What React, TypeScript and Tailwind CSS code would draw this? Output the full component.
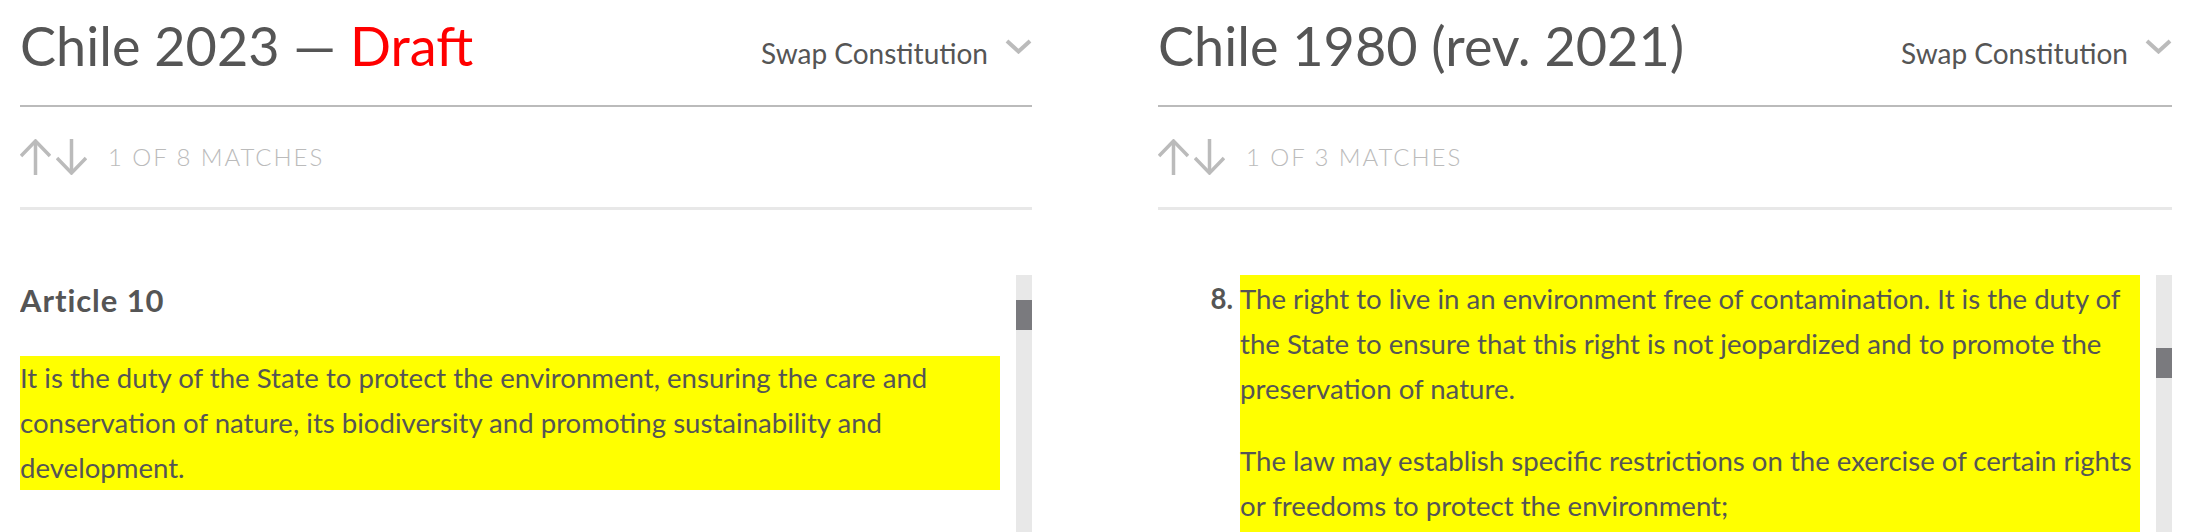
import React from 'react';

interface PanelProps {
    title: React.ReactNode;
    matches: string;
    thumbTop: number;
    children: React.ReactNode;
}

const Chevron: React.FC = () => (
    <svg width="27" height="15" viewBox="0 0 27 15" className="block">
        <polyline points="2,2 13.5,12.5 25,2" fill="none" stroke="#bbbbbb" strokeWidth="4" />
    </svg>
);

const UpArrow: React.FC = () => (
    <svg width="31" height="36" viewBox="0 0 31 36" className="block">
        <line x1="15.5" y1="2" x2="15.5" y2="36" stroke="#bbbbbb" strokeWidth="3.5" />
        <polyline points="1,17 15.5,2 30,17" fill="none" stroke="#bbbbbb" strokeWidth="3.5" />
    </svg>
);

const DownArrow: React.FC = () => (
    <svg width="31" height="36" viewBox="0 0 31 36" className="block">
        <line x1="15.5" y1="0" x2="15.5" y2="34" stroke="#bbbbbb" strokeWidth="3.5" />
        <polyline points="1,19 15.5,34 30,19" fill="none" stroke="#bbbbbb" strokeWidth="3.5" />
    </svg>
);

const Panel: React.FC<PanelProps> = ({ title, matches, thumbTop, children }) => (
    <div className="flex flex-col">
        {/* header */}
        <div className="h-[107px] flex justify-between border-b-2 border-[#bbbbbb]">
            <h1 className="pt-[14px] text-[54px] leading-[64px] text-[#555555] font-normal whitespace-nowrap">{title}</h1>
            <div className="pt-[36px] flex items-start gap-[17px]">
                <span className="text-[28px] leading-[34px] text-[#555555] whitespace-nowrap">Swap Constitution</span>
                <div className="pt-[3px]">
                    <Chevron />
                </div>
            </div>
        </div>

        {/* match navigation */}
        <div className="h-[103px] border-b-[3px] border-[#e8e8e8] flex items-start pt-[32px]">
            <div className="flex gap-[5px]">
                <UpArrow />
                <DownArrow />
            </div>
            <span className="ml-[21px] mt-[3px] text-[24px] leading-[29px] font-light tracking-[0.08em] text-[#bbbbbb] whitespace-nowrap">{matches}</span>
        </div>

        {/* scroll body */}
        <div className="mt-[65px] h-[257px] flex overflow-hidden">
            <div className="flex-1 overflow-hidden pr-[16px]">{children}</div>
            <div className="w-[16px] bg-[#e8e8e8] relative">
                <div className="absolute left-0 w-[16px] h-[30px] bg-[#7a7a7e]" style={{ top: thumbTop }} />
            </div>
        </div>
    </div>
);

const App: React.FC = () => {
    return (
        <div className="w-[2190px] h-[532px] overflow-hidden bg-white flex font-[Lato,sans-serif]">
            <div className="ml-[20px] w-[1012px]">
                <Panel
                    title={<>Chile 2023 — <span className="text-[#ff0000]">Draft</span></>}
                    matches="1 OF 8 MATCHES"
                    thumbTop={25}
                >
                    <h2 className="pt-[7px] text-[31px] leading-[37px] font-bold tracking-[0.03em] text-[#555555]">Article 10</h2>
                    <p className="mt-[37px] bg-[#ffff00] text-[27.6px] leading-[44.8px] text-[#555555]">
                        It is the duty of the State to protect the environment, ensuring the care and conservation of nature, its biodiversity and promoting sustainability and development.
                    </p>
                </Panel>
            </div>

            <div className="ml-[126px] w-[1014px]">
                <Panel title="Chile 1980 (rev. 2021)" matches="1 OF 3 MATCHES" thumbTop={73}>
                    <div className="flex">
                        <div className="w-[82px] pr-[7px] pt-[2px] text-right text-[27.6px] leading-[44.8px] font-bold text-[#555555]">8.</div>
                        <div className="flex-1 bg-[#ffff00] pt-[2px] pb-[40px] text-[27.6px] leading-[44.8px] text-[#555555]">
                            <p>The right to live in an environment free of contamination. It is the duty of the State to ensure that this right is not jeopardized and to promote the preservation of nature.</p>
                            <p className="mt-[28px]">The law may establish specific restrictions on the exercise of certain rights or freedoms to protect the environment;</p>
                        </div>
                    </div>
                </Panel>
            </div>
        </div>
    );
};

export default App;
